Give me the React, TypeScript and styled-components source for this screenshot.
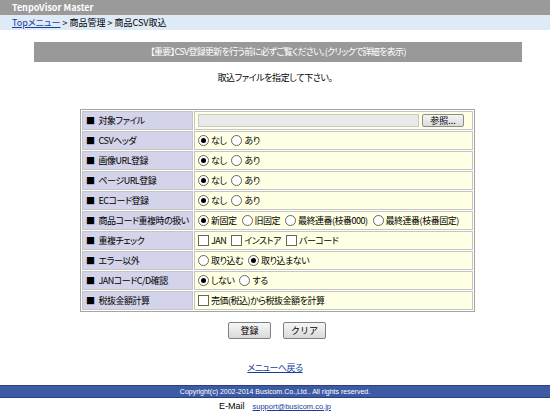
import styled, { createGlobalStyle } from "styled-components";

const GlobalStyle = createGlobalStyle`
  body {
    margin: 0;
    background: #fff;
    color: #000;
    font-family: "Noto Sans CJK JP", "Liberation Sans", sans-serif;
    font-size: 9px;
    font-feature-settings: "palt";
  }
`;

const TitleBar = styled.div`
  height: 15px;
  line-height: 15px;
  padding-left: 12px;
  background: #9a9a9a;
  color: #fff;
  font-weight: bold;
  font-size: 9px;
`;

const Crumbs = styled.div`
  height: 15px;
  line-height: 15px;
  padding-left: 12px;
  background: #dfeaf7;
  font-size: 9px;
`;

const Link = styled.a`
  color: #1a3c9c;
  text-decoration: underline;
  cursor: pointer;
`;

const Notice = styled.div`
  margin: 12px 28px 0 34px;
  height: 20px;
  line-height: 20px;
  background: #999;
  color: #fff;
  text-align: center;
  letter-spacing: -0.7px;
  cursor: pointer;
`;

const Instruction = styled.div`
  margin-top: 9px;
  text-align: center;
  line-height: 14px;
  letter-spacing: -0.4px;
`;

const TableWrap = styled.div`
  display: flex;
  justify-content: center;
  padding-left: 5px;
  margin-top: 24px;
`;

const FormTable = styled.table`
  width: 395px;
  table-layout: fixed;
  border: 1px solid #a4a4a4;
  border-spacing: 1px;
  background: #fff;
  letter-spacing: -0.5px;
`;

const LabelCell = styled.td`
  width: 106px;
  height: 17px;
  padding: 0 0 0 3px;
  background: #d3d3e9;
  border: 1px solid #c4c4c4;
  white-space: nowrap;
`;

const Bullet = styled.span`
  margin-right: 4px;
`;

const ValueCell = styled.td`
  height: 17px;
  padding: 0 0 0 3px;
  background: #ffffe3;
  border: 1px solid #c4c4c4;
  white-space: nowrap;
`;

const Options = styled.div`
  display: flex;
  align-items: center;
  gap: 5px;
`;

const Option = styled.label`
  display: inline-flex;
  align-items: center;
  gap: 2px;
`;

const RadioMark = styled.span<{ $on?: boolean }>`
  width: 9px;
  height: 9px;
  border: 1px solid #666;
  border-radius: 50%;
  background: #fff;
  display: inline-flex;
  align-items: center;
  justify-content: center;
  &::after {
    content: "";
    width: 5px;
    height: 5px;
    border-radius: 50%;
    background: ${(p) => (p.$on ? "#000" : "transparent")};
  }
`;

const CheckMark = styled.span`
  width: 9px;
  height: 9px;
  border: 1px solid #666;
  background: #fff;
`;

const FileRow = styled.div`
  display: flex;
  align-items: center;
  gap: 3px;
  padding-right: 8px;
`;

const FileField = styled.div`
  flex: 1;
  height: 11px;
  background: #e9e9e9;
  border: 1px solid #c8c8c8;
`;

const SmallButton = styled.button`
  width: 42px;
  height: 13px;
  padding: 0;
  font-family: inherit;
  font-size: 9px;
  line-height: 11px;
  border: 1px solid #8c8c8c;
  border-radius: 2px;
  background: linear-gradient(#f4f4f4, #dcdcdc);
  color: #000;
`;

const Actions = styled.div`
  display: flex;
  justify-content: center;
  gap: 12px;
  margin-top: 10px;
  padding-left: 4px;
`;

const ActionButton = styled.button`
  width: 43px;
  height: 17px;
  padding: 0;
  font-family: inherit;
  font-size: 9px;
  border: 1px solid #7f7f7f;
  border-radius: 2px;
  background: linear-gradient(#f6f6f6, #d9d9d9);
  color: #000;
`;

const BackLink = styled.div`
  margin-top: 22px;
  text-align: center;
  line-height: 14px;
  letter-spacing: -0.5px;
`;

const Footer = styled.div`
  margin-top: 10px;
  height: 11px;
  line-height: 11px;
  background: #3d5aa5;
  border-top: 1px solid #2a4080;
  border-bottom: 1px solid #2a4080;
  color: #fff;
  text-align: center;
  font-size: 7px;
  font-family: "Liberation Sans", sans-serif;
`;

const Mail = styled.div`
  display: flex;
  justify-content: center;
  align-items: baseline;
  gap: 8px;
  margin-top: 1px;
  font-size: 9px;
  line-height: 14px;
  font-family: "Liberation Sans", sans-serif;
`;

const MailLink = styled(Link)`
  font-size: 7.5px;
`;

type Choice = { label: string; on?: boolean };

function Radios({ items }: { items: Choice[] }) {
  return (
    <Options>
      {items.map((it) => (
        <Option key={it.label}>
          <RadioMark $on={it.on} />
          {it.label}
        </Option>
      ))}
    </Options>
  );
}

function Checks({ items }: { items: string[] }) {
  return (
    <Options>
      {items.map((it) => (
        <Option key={it}>
          <CheckMark />
          {it}
        </Option>
      ))}
    </Options>
  );
}

function Label({ children }: { children: string }) {
  return (
    <LabelCell>
      <Bullet>■</Bullet>
      {children}
    </LabelCell>
  );
}

const yesNo: Choice[] = [{ label: "なし", on: true }, { label: "あり" }];

export default function App() {
  return (
    <>
      <GlobalStyle />
      <TitleBar>TenpoVisor Master</TitleBar>
      <Crumbs>
        <Link>Topメニュー</Link> &gt; 商品管理 &gt; 商品CSV取込
      </Crumbs>
      <Notice>【重要】CSV登録更新を行う前に必ずご覧ください。(クリックで詳細を表示)</Notice>
      <Instruction>取込ファイルを指定して下さい。</Instruction>
      <TableWrap>
        <FormTable>
          <tbody>
            <tr>
              <Label>対象ファイル</Label>
              <ValueCell>
                <FileRow>
                  <FileField />
                  <SmallButton>参照...</SmallButton>
                </FileRow>
              </ValueCell>
            </tr>
            <tr>
              <Label>CSVヘッダ</Label>
              <ValueCell><Radios items={yesNo} /></ValueCell>
            </tr>
            <tr>
              <Label>画像URL登録</Label>
              <ValueCell><Radios items={yesNo} /></ValueCell>
            </tr>
            <tr>
              <Label>ページURL登録</Label>
              <ValueCell><Radios items={yesNo} /></ValueCell>
            </tr>
            <tr>
              <Label>ECコード登録</Label>
              <ValueCell><Radios items={yesNo} /></ValueCell>
            </tr>
            <tr>
              <Label>商品コード重複時の扱い</Label>
              <ValueCell>
                <Radios
                  items={[
                    { label: "新固定", on: true },
                    { label: "旧固定" },
                    { label: "最終連番(枝番000)" },
                    { label: "最終連番(枝番固定)" },
                  ]}
                />
              </ValueCell>
            </tr>
            <tr>
              <Label>重複チェック</Label>
              <ValueCell><Checks items={["JAN", "インストア", "バーコード"]} /></ValueCell>
            </tr>
            <tr>
              <Label>エラー以外</Label>
              <ValueCell>
                <Radios items={[{ label: "取り込む" }, { label: "取り込まない", on: true }]} />
              </ValueCell>
            </tr>
            <tr>
              <Label>JANコードC/D確認</Label>
              <ValueCell>
                <Radios items={[{ label: "しない", on: true }, { label: "する" }]} />
              </ValueCell>
            </tr>
            <tr>
              <Label>税抜金額計算</Label>
              <ValueCell><Checks items={["売価(税込)から税抜金額を計算"]} /></ValueCell>
            </tr>
          </tbody>
        </FormTable>
      </TableWrap>
      <Actions>
        <ActionButton>登録</ActionButton>
        <ActionButton>クリア</ActionButton>
      </Actions>
      <BackLink>
        <Link>メニューへ戻る</Link>
      </BackLink>
      <Footer>Copyright(c) 2002-2014 Busicom.Co.,Ltd.. All rights reserved.</Footer>
      <Mail>
        <span>E-Mail</span>
        <MailLink>support@busicom.co.jp</MailLink>
      </Mail>
    </>
  );
}
